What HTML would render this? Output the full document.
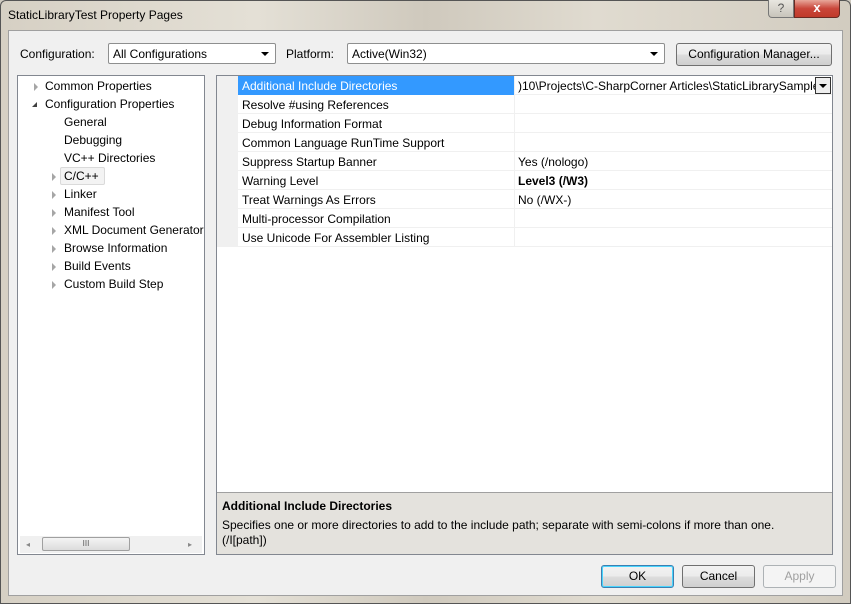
<!DOCTYPE html>
<html><head><style>
*{box-sizing:border-box;margin:0;padding:0}
body{width:851px;height:604px;overflow:hidden;background:#cfcac0;font-family:"Liberation Sans",sans-serif;font-size:12px;color:#000;position:relative}
.frame{position:absolute;left:0;top:0;width:851px;height:604px;border:1px solid #555;border-radius:6px 6px 0 0;background:linear-gradient(90deg,#d6d0c4 0%,#e4e0d6 30%,#cfc9bd 50%,#e0dbd0 70%,#d2ccc0 100%)}
.title{position:absolute;left:8px;top:8px;font-size:12px;color:#000}
.client{position:absolute;left:8px;top:30px;width:835px;height:566px;background:#f0f0f0;border:1px solid #a0a0a0}
.a{position:absolute}
.combo{position:absolute;height:21px;border:1px solid #8e8f8f;background:#fff;border-radius:2px;padding:3px 4px;font-size:12px}
.combo:after{content:"";position:absolute;right:6px;top:8px;border:4px solid transparent;border-top:4px solid #000;border-bottom:0}
.btn{position:absolute;height:23px;border:1px solid #707070;border-radius:3px;background:linear-gradient(#f2f2f2,#ebebeb 50%,#dddddd 51%,#cfcfcf);text-align:center;line-height:21px;font-size:12px}
.tree{position:absolute;left:17px;top:75px;width:188px;height:480px;background:#fff;border:1px solid #828790}
.ti{position:absolute;font-size:12px;white-space:nowrap}
.arr{position:absolute;width:0;height:0;border-top:4px solid transparent;border-bottom:4px solid transparent;border-left:4px solid #a6a6a6}
.grid{position:absolute;left:216px;top:75px;width:617px;height:480px;background:#fff;border:1px solid #828790}
.row{position:absolute;left:21px;width:594px;height:19px;border-bottom:1px solid #f0f0f0;font-size:12px}
.row .k{position:absolute;left:4px;top:3px}
.row .v{position:absolute;left:276px;top:0;height:18px;width:318px;border-left:1px solid #f0f0f0;padding:3px 0 0 3px;white-space:nowrap;overflow:hidden}
</style></head><body>
<div class="frame"></div>
<div class="title">StaticLibraryTest Property Pages</div>
<div class="a" style="left:768px;top:0;width:26px;height:18px;border:1px solid #777;border-top:0;border-radius:0 0 0 4px;background:linear-gradient(#e8e6e0,#c8c4bb);text-align:center;font-size:12px;color:#555;line-height:16px">?</div>
<div class="a" style="left:794px;top:0;width:46px;height:18px;border:1px solid #6a2a22;border-top:0;border-radius:0 0 4px 0;background:linear-gradient(#e8a79a,#c9463a 50%,#c03a2a);text-align:center;color:#fff;font-weight:bold;line-height:16px;font-size:13px">x</div>
<div class="client"></div>
<div class="a" style="left:20px;top:47px">Configuration:</div>
<div class="combo" style="left:108px;top:43px;width:168px">All Configurations</div>
<div class="a" style="left:286px;top:47px">Platform:</div>
<div class="combo" style="left:347px;top:43px;width:318px">Active(Win32)</div>
<div class="btn" style="left:676px;top:43px;width:156px">Configuration Manager...</div>

<div class="tree">
<div class="arr" style="left:16px;top:7px"></div><div class="ti" style="left:27px;top:3px">Common Properties</div>
<div class="a" style="left:14px;top:26px;border-left:5px solid transparent;border-bottom:5px solid #404040"></div><div class="ti" style="left:27px;top:21px">Configuration Properties</div>
<div class="ti" style="left:46px;top:39px">General</div>
<div class="ti" style="left:46px;top:57px">Debugging</div>
<div class="ti" style="left:46px;top:75px">VC++ Directories</div>
<div class="a" style="left:42px;top:91px;width:45px;height:18px;background:#f3f3f3;border:1px solid #dadada;border-radius:2px"></div>
<div class="arr" style="left:34px;top:97px"></div><div class="ti" style="left:46px;top:93px">C/C++</div>
<div class="arr" style="left:34px;top:115px"></div><div class="ti" style="left:46px;top:111px">Linker</div>
<div class="arr" style="left:34px;top:133px"></div><div class="ti" style="left:46px;top:129px">Manifest Tool</div>
<div class="arr" style="left:34px;top:151px"></div><div class="ti" style="left:46px;top:147px">XML Document Generator</div>
<div class="arr" style="left:34px;top:169px"></div><div class="ti" style="left:46px;top:165px">Browse Information</div>
<div class="arr" style="left:34px;top:187px"></div><div class="ti" style="left:46px;top:183px">Build Events</div>
<div class="arr" style="left:34px;top:205px"></div><div class="ti" style="left:46px;top:201px">Custom Build Step</div>
<div class="a" style="left:2px;top:460px;width:182px;height:17px;background:#f0f0f0"></div>
<div class="a" style="left:24px;top:461px;width:88px;height:14px;border:1px solid #a0a0a0;border-radius:2px;background:linear-gradient(#f4f4f4,#dcdcdc);text-align:center;font-size:8px;line-height:12px;color:#555">III</div>
<div class="a" style="left:8px;top:464px;font-size:8px;color:#888">◂</div>
<div class="a" style="left:170px;top:464px;font-size:8px;color:#888">▸</div>
</div>

<div class="grid">
<div class="a" style="left:0;top:0;width:21px;height:171px;background:#f0f0f0"></div>
<div class="row" style="top:0"><div class="a" style="left:0;top:0;width:276px;height:19px;background:#3399ff"></div><span class="k" style="color:#fff">Additional Include Directories</span><div class="v" style="font-size:12px">)10\Projects\C-SharpCorner Articles\StaticLibrarySample</div>
<div class="a" style="left:577px;top:1px;width:16px;height:17px;border:1px solid #333;background:#eee"><div class="a" style="left:3px;top:6px;border:4px solid transparent;border-top:4px solid #000;border-bottom:0"></div></div></div>
<div class="row" style="top:19px"><span class="k">Resolve #using References</span><div class="v"></div></div>
<div class="row" style="top:38px"><span class="k">Debug Information Format</span><div class="v"></div></div>
<div class="row" style="top:57px"><span class="k">Common Language RunTime Support</span><div class="v"></div></div>
<div class="row" style="top:76px"><span class="k">Suppress Startup Banner</span><div class="v">Yes (/nologo)</div></div>
<div class="row" style="top:95px"><span class="k">Warning Level</span><div class="v" style="font-weight:bold">Level3 (/W3)</div></div>
<div class="row" style="top:114px"><span class="k">Treat Warnings As Errors</span><div class="v">No (/WX-)</div></div>
<div class="row" style="top:133px"><span class="k">Multi-processor Compilation</span><div class="v"></div></div>
<div class="row" style="top:152px"><span class="k">Use Unicode For Assembler Listing</span><div class="v"></div></div>
<div class="a" style="left:0;top:416px;width:615px;height:62px;background:#e4e2dd;border-top:1px solid #a0a0a0">
<div class="a" style="left:5px;top:6px;font-weight:bold">Additional Include Directories</div>
<div class="a" style="left:5px;top:25px;white-space:nowrap">Specifies one or more directories to add to the include path; separate with semi-colons if more than one.</div>
<div class="a" style="left:5px;top:40px">(/I[path])</div>
</div>
</div>

<div class="btn" style="left:601px;top:565px;width:73px;border-color:#3c7fb1;box-shadow:inset 0 0 0 1px #48d4fd">OK</div>
<div class="btn" style="left:682px;top:565px;width:73px">Cancel</div>
<div class="btn" style="left:763px;top:565px;width:73px;background:#f4f4f4;border-color:#adb2b5;color:#a0a0a0">Apply</div>
</body></html>
